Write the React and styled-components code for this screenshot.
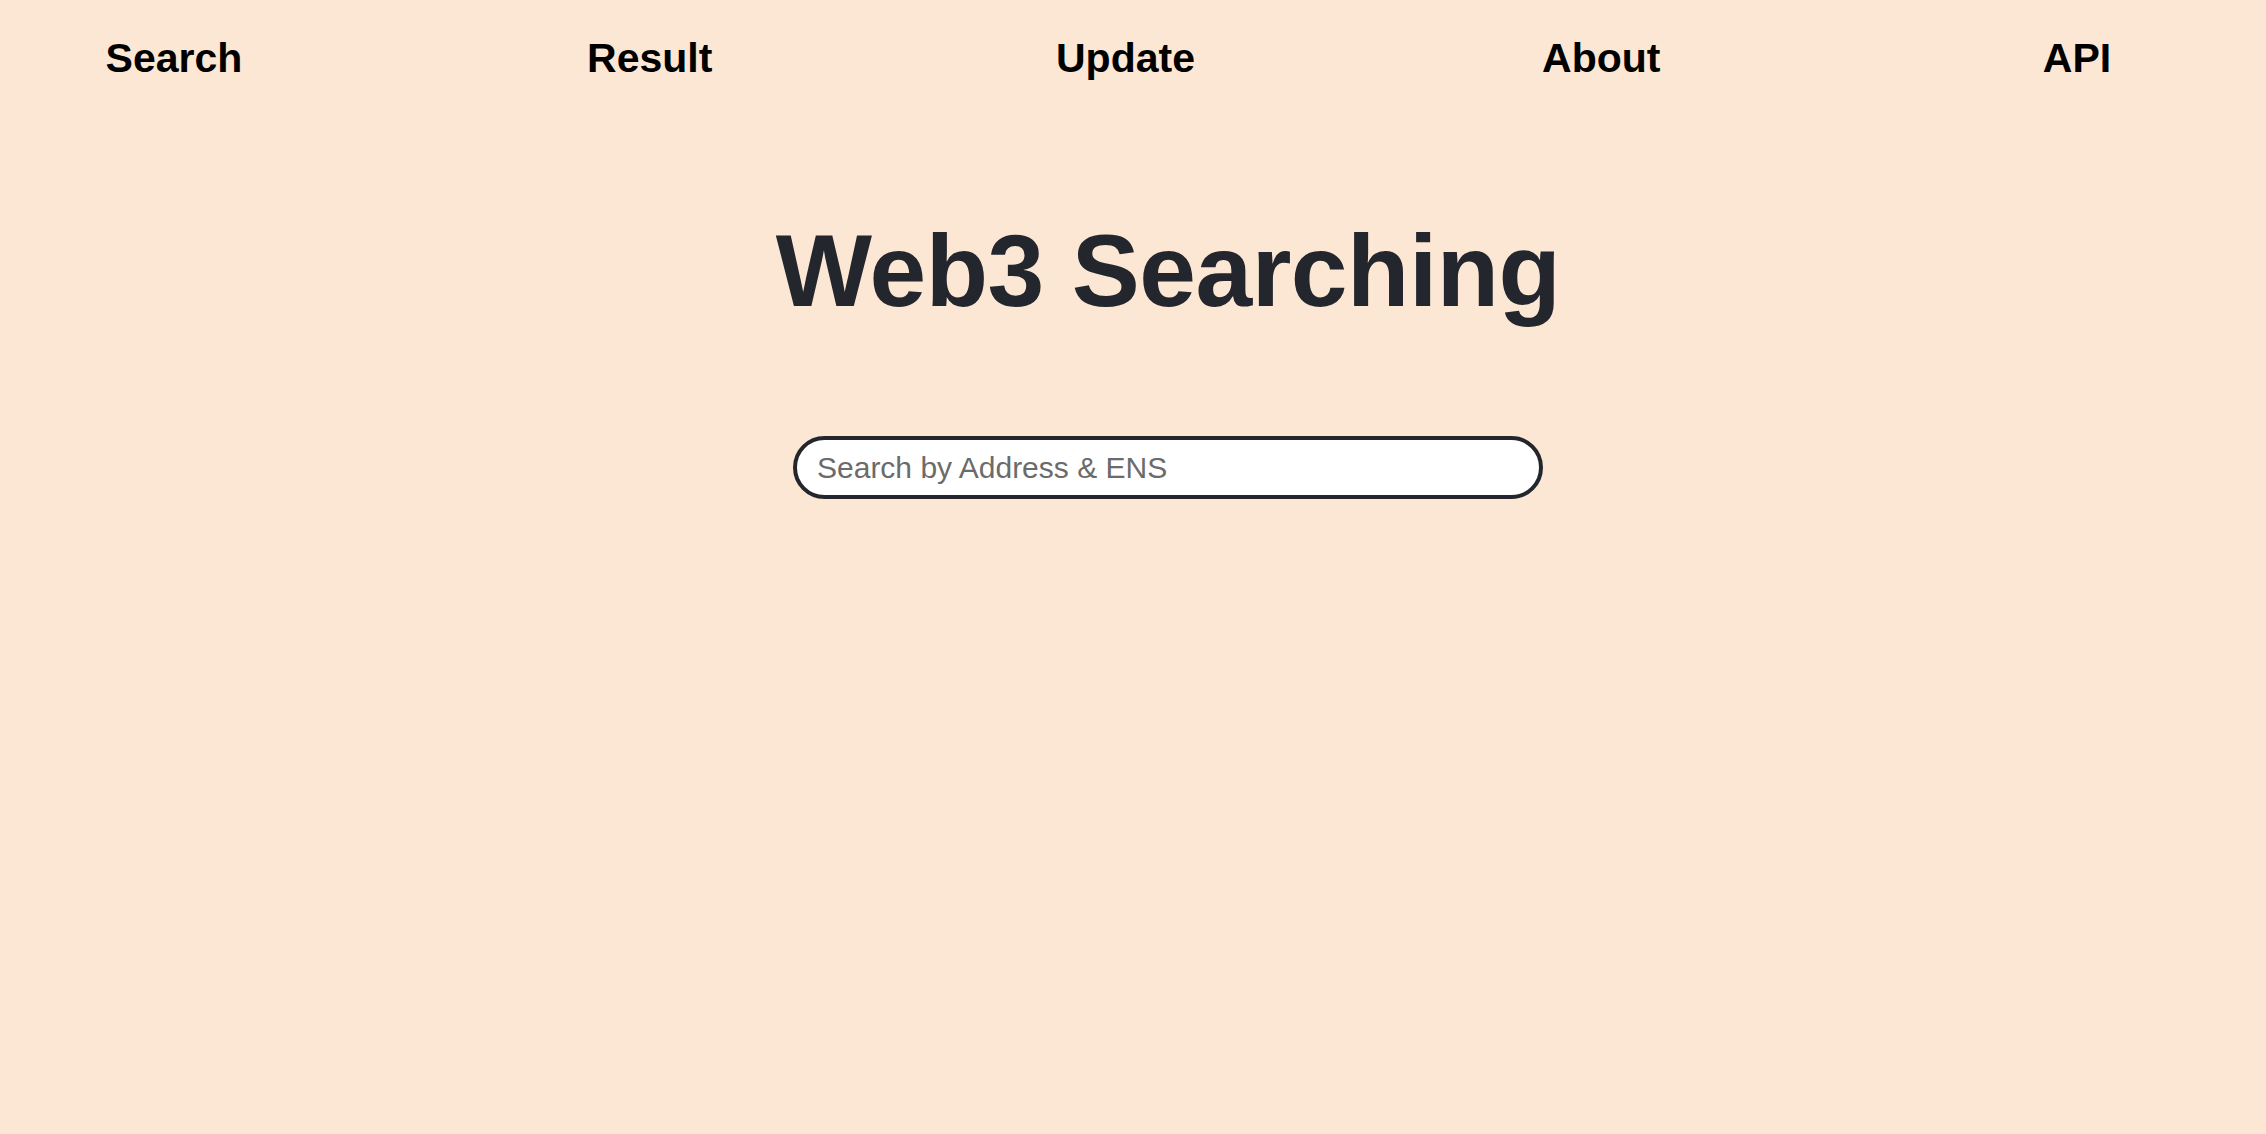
import styled, { createGlobalStyle } from "styled-components";

const GlobalStyle = createGlobalStyle`
  html, body {
    margin: 0;
    padding: 0;
    background: #fce7d4;
    font-family: "Liberation Sans", Arial, sans-serif;
  }
`;

const Page = styled.div`
  min-height: 1134px;
  background: #fce7d4;
`;

const Nav = styled.nav`
  display: flex;
  justify-content: space-between;
  padding: 35px 89px 0 74px;
`;

const NavLink = styled.a`
  width: 200px;
  text-align: center;
  font-size: 41px;
  font-weight: 700;
  color: #000;
  text-decoration: none;
  cursor: pointer;
`;

const Main = styled.main`
  display: flex;
  flex-direction: column;
  align-items: center;
  padding-left: 70px;
  padding-top: 131px;
`;

const Title = styled.h1`
  margin: 0;
  font-size: 102px;
  font-weight: 700;
  color: #23262d;
  letter-spacing: -0.5px;
`;

const SearchInput = styled.input`
  margin-top: 106px;
  box-sizing: border-box;
  width: 750px;
  height: 63px;
  padding: 0 20px;
  border: 4.5px solid #23262d;
  border-radius: 32px;
  background: #fff;
  font-family: "Liberation Sans", Arial, sans-serif;
  font-size: 30px;
  color: #23262d;
  outline: none;
  &::placeholder {
    color: #6b6b6b;
  }
`;

const links = ["Search", "Result", "Update", "About", "API"];

export default function App() {
  return (
    <Page>
      <GlobalStyle />
      <Nav>
        {links.map((l) => (
          <NavLink key={l}>{l}</NavLink>
        ))}
      </Nav>
      <Main>
        <Title>Web3 Searching</Title>
        <SearchInput placeholder="Search by Address & ENS" />
      </Main>
    </Page>
  );
}
